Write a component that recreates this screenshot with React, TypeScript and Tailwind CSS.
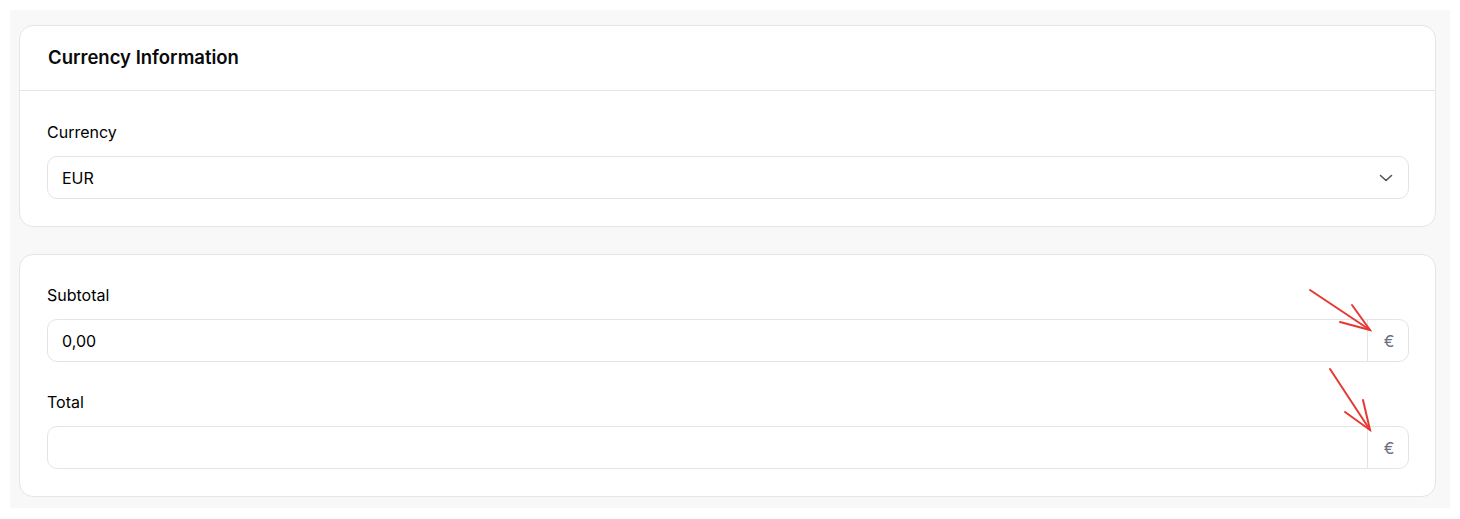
import React from "react";

const font = { fontFamily: "Inter, 'Noto Sans', sans-serif" };

function Label({ children }: { children: React.ReactNode }) {
  return <div className="text-[16px] leading-6 font-normal text-[#000000] mb-[12px]">{children}</div>;
}

function EuroInput({ value }: { value: string }) {
  return (
    <div className="flex h-[43px] rounded-[10px] border border-[#e4e4e7] bg-white overflow-hidden">
      <div className="flex-1 flex items-center pl-[14px] text-[16px] text-[#000000]">{value}</div>
      <div className="w-[41px] border-l border-[#e4e4e7] flex items-center justify-center pl-[2px] text-[16px] font-normal text-[#6b7280]">€</div>
    </div>
  );
}

export default function App() {
  return (
    <div className="w-[1460px] h-[519px] bg-white p-[10px]" style={font}>
      <div className="relative h-[498px] bg-[#f8f8f8] pt-[15px] pl-[9px] pr-[14px]">
        <div className="rounded-[14px] border border-[#e5e5e5] bg-white">
          <div className="h-[65px] border-b border-[#e5e5e5] px-[28px] flex items-center">
            <div className="text-[18.5px] font-semibold text-[#0a0a0a]">Currency Information</div>
          </div>
          <div className="pl-[27px] pr-[26px] pt-[29px] pb-[27px]">
            <Label>Currency</Label>
            <div className="flex h-[43px] items-center justify-between rounded-[10px] border border-[#e4e4e7] bg-white pl-[14px] pr-[15px]">
              <span className="text-[16px] text-[#000000]">EUR</span>
              <svg width="14" height="14" viewBox="0 0 14 14" fill="none" stroke="#52525b" strokeWidth="1.6" strokeLinecap="round" strokeLinejoin="round">
                <path d="M1.5 4.5L7 9.5L12.5 4.5" />
              </svg>
            </div>
          </div>
        </div>
        <div className="mt-[27px] rounded-[14px] border border-[#e5e5e5] bg-white pl-[27px] pr-[26px] pt-[28px] pb-[27px]">
          <Label>Subtotal</Label>
          <EuroInput value="0,00" />
          <div className="mt-[28px]">
            <Label>Total</Label>
            <EuroInput value="" />
          </div>
        </div>
        <svg className="absolute left-0 top-0 pointer-events-none" width="1440" height="498" viewBox="10 10 1440 498">
          <g stroke="#e53935" strokeWidth="2" fill="none" strokeLinecap="round">
            <path d="M1310 290 L1370 330" />
            <path d="M1352 305 L1370 330 L1340 322" />
            <path d="M1330 369 L1370 430" />
            <path d="M1363 400 L1370 430 L1345 412" />
          </g>
        </svg>
      </div>
    </div>
  );
}
